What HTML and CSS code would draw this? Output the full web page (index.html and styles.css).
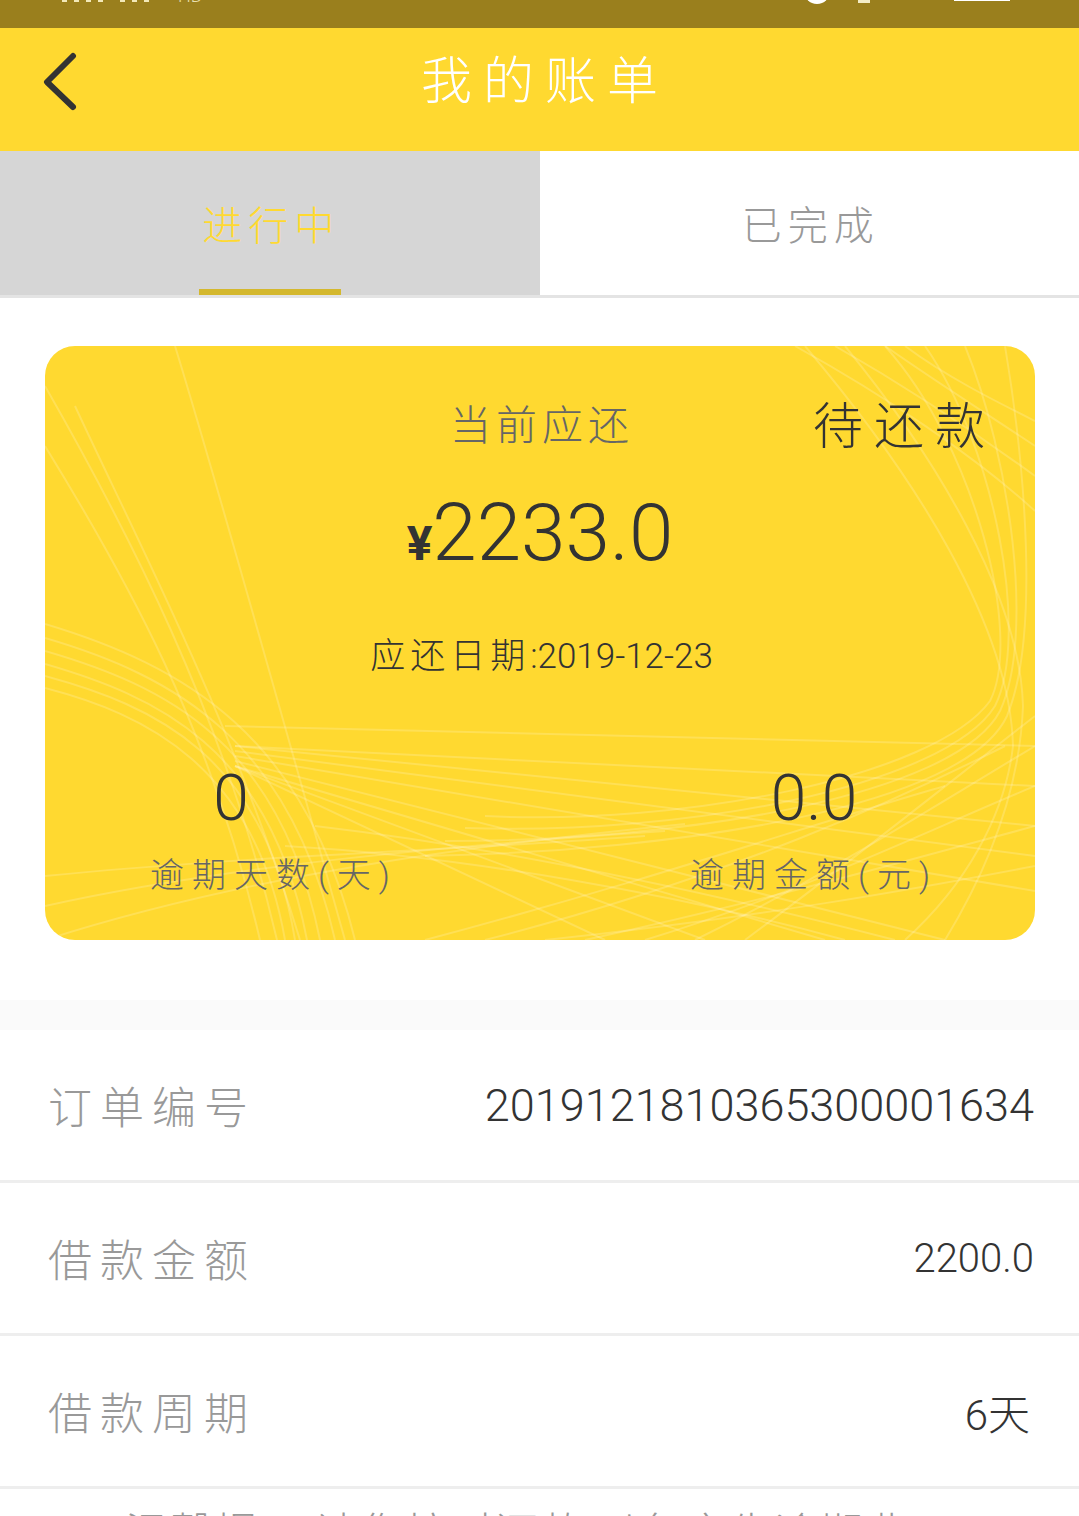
FILE: index.html
```html
<!DOCTYPE html>
<html lang="zh-CN">
<head>
    <meta charset="UTF-8">
    <meta name="viewport" content="width=device-width, initial-scale=1.0">
    <title>我的账单</title>
    <link rel="stylesheet" href="styles.css">
</head>
<body>
    <!-- status bar, cut off by the top of the screen -->
    <div class="status-bar">
        <div class="status-left">
            <span class="dot"></span><span class="dot"></span><span class="dot"></span><span class="dot"></span>
            <span class="dot dot-gap"></span><span class="dot"></span><span class="dot"></span>
            <span class="net">HD</span>
        </div>
        <div class="status-right">
            <span class="clock"></span>
            <span class="signal"></span>
            <span class="battery"></span>
        </div>
    </div>

    <header class="top-bar">
        <svg class="back" width="36" height="60" viewBox="0 0 36 60">
            <polyline points="30,5 4,31 30,56" fill="none" stroke="#333" stroke-width="6" stroke-linecap="round" stroke-linejoin="round"/>
        </svg>
        <h1>我的账单</h1>
    </header>

    <nav class="tabs">
        <div class="tab tab-active">进行中</div>
        <div class="tab">已完成</div>
    </nav>

    <section class="card-wrap">
        <div class="card">
            <svg class="card-lines" width="990" height="594" viewBox="0 0 990 594">
                <g fill="none" stroke="#fff" stroke-opacity="0.18" stroke-width="2">
                    <!-- left swoosh -->
                    <path d="M0 318 C110 350 225 400 262 594"/>
                    <path d="M0 330 C110 360 220 410 250 594"/>
                    <path d="M0 342 C100 368 210 420 240 594"/>
                    <path d="M0 305 C120 340 235 395 275 594"/>
                    <path d="M0 292 C130 330 245 395 290 594"/>
                    <path d="M0 278 C140 320 260 390 310 594"/>
                    <path d="M0 100 C80 230 165 380 215 594"/>
                    <path d="M0 40 C80 180 180 370 232 594"/>
                    <path d="M30 60 C90 190 190 380 255 594"/>
                    <path d="M130 0 C170 130 240 380 300 594"/>
                    <!-- rays out of the swoosh -->
                    <path d="M190 400 L990 480"/>
                    <path d="M190 405 L990 510"/>
                    <path d="M190 410 L990 545"/>
                    <path d="M190 415 L900 594"/>
                    <path d="M190 420 L780 594"/>
                    <path d="M190 420 L660 594"/>
                    <path d="M190 420 L560 594"/>
                    <path d="M190 400 L990 440"/>
                    <path d="M180 380 L990 400"/>
                    <!-- right swoosh -->
                    <path d="M420 482 C640 490 900 440 950 360 C985 290 950 100 880 0"/>
                    <path d="M400 495 C640 495 910 450 955 365 C990 290 965 110 920 0"/>
                    <path d="M380 510 C640 505 920 460 962 370 C995 290 980 120 960 0"/>
                    <path d="M440 470 C640 480 890 430 945 355 C978 290 930 100 840 0"/>
                    <path d="M0 594 C200 530 420 500 640 478"/>
                    <path d="M0 560 C180 520 400 500 620 485"/>
                    <path d="M0 530 C200 510 400 505 600 490"/>
                    <path d="M800 0 C890 110 975 250 978 360 C975 440 945 520 900 594"/>
                    <path d="M760 0 C870 130 965 280 968 400 C960 470 920 540 860 594"/>
                    <!-- bottom mesh -->
                    <path d="M990 370 C900 440 800 520 700 594"/>
                    <path d="M990 400 C890 460 780 530 650 594"/>
                    <path d="M990 440 C870 490 760 545 600 594"/>
                    <path d="M990 480 C860 515 720 555 540 594"/>
                    <path d="M990 520 C860 545 720 570 500 594"/>
                    <path d="M960 400 C860 450 690 530 440 594"/>
                    <path d="M900 440 C760 480 620 530 380 594"/>
                    <path d="M240 500 C420 510 640 550 800 594"/>
                    <path d="M270 480 C440 500 640 540 850 594"/>
                    <!-- top right corner -->
                    <path d="M860 0 C900 30 950 55 990 75"/>
                    <path d="M840 0 C890 35 945 70 990 100"/>
                    <path d="M790 0 C860 40 935 90 990 130"/>
                    <path d="M750 0 C840 50 930 110 990 165"/>
                </g>
            </svg>

            <div class="due-label">当前应还</div>
            <div class="due-status">待还款</div>
            <div class="due-amount"><span class="yen">¥</span>2233.0</div>
            <div class="due-date"><span class="date-cn">应还日期</span>:2019-12-23</div>
            <div class="stats">
                <div class="stat">
                    <div class="stat-num stat-num-days">0</div>
                    <div class="stat-label">逾期天数(天)</div>
                </div>
                <div class="stat">
                    <div class="stat-num">0.0</div>
                    <div class="stat-label">逾期金额(元)</div>
                </div>
            </div>
        </div>
    </section>

    <div class="band"></div>

    <section class="info-list">
        <div class="info-row">
            <span class="info-name">订单编号</span>
            <span class="info-value info-value-long">2019121810365300001634</span>
        </div>
        <div class="info-row">
            <span class="info-name">借款金额</span>
            <span class="info-value">2200.0</span>
        </div>
        <div class="info-row">
            <span class="info-name">借款周期</span>
            <span class="info-value info-value-days">6天</span>
        </div>
        <div class="info-note">温馨提示:请您按时还款,以免产生逾期费用</div>
    </section>
</body>
</html>
```

FILE: styles.css
```css
html, body {
    margin: 0;
    height: 100%;
    overflow: hidden;
}
body {
    font-family: Roboto, "Noto Sans CJK SC", sans-serif;
    font-weight: 300;
    background: #fff;
    color: #333;
}

/* status bar */
.status-bar {
    height: 28px;
    background: #9a7f1d;
    display: flex;
    justify-content: space-between;
    overflow: hidden;
    padding: 0 69px 0 62px;
}
.status-left, .status-right {
    display: flex;
    align-items: flex-start;
}
.dot {
    width: 5px;
    height: 2px;
    margin-right: 7px;
    background: #f3e9b8;
}
.dot-gap {
    margin-left: 10px;
}
.net {
    margin: -12px 0 0 22px;
    font-size: 18px;
    line-height: 16px;
    color: #e8dfae;
}
.clock {
    width: 26px;
    height: 26px;
    margin-top: -22px;
    border-radius: 50%;
    background: #fff;
}
.signal {
    width: 12px;
    height: 3px;
    margin-left: 28px;
    background: #f3ecc6;
}
.battery {
    width: 56px;
    height: 1px;
    margin-left: 84px;
    background: #fff;
}

/* title */
.top-bar {
    position: relative;
    height: 123px;
    background: #ffd930;
    display: flex;
    justify-content: center;
}
.top-bar h1 {
    margin: 24px -11px 0 0;
    font-size: 51px;
    line-height: 60px;
    font-weight: 300;
    letter-spacing: 11px;
    color: #fff;
}
.back {
    position: absolute;
    left: 43px;
    top: 23px;
}

/* tabs */
.tabs {
    display: flex;
    height: 144px;
    border-bottom: 3px solid #e4e4e4;
}
.tab {
    position: relative;
    flex: 1;
    display: flex;
    align-items: center;
    justify-content: center;
    padding-left: 3px;
    font-size: 40px;
    letter-spacing: 6px;
    color: #999;
}
.tab-active {
    background: #d6d6d6;
    color: #ffd930;
}
.tab-active::after {
    content: '';
    position: absolute;
    left: 199px;
    bottom: 0;
    width: 142px;
    height: 6px;
    background: #d4b82e;
}

/* yellow card */
.card-wrap {
    padding: 48px 44px 60px 45px;
}
.card {
    position: relative;
    height: 594px;
    box-sizing: border-box;
    padding-top: 50px;
    border-radius: 30px;
    background: #ffd930;
    overflow: hidden;
    text-align: center;
}
.card-lines {
    position: absolute;
    left: 0;
    top: 0;
}
.due-label, .due-amount, .due-date, .stats {
    position: relative;
}
.due-label {
    padding-left: 4px;
    font-size: 41px;
    line-height: 60px;
    letter-spacing: 5px;
    color: #666;
}
.due-status {
    position: absolute;
    right: 50px;
    top: 51px;
    font-size: 50px;
    line-height: 60px;
    letter-spacing: 11px;
    margin-right: -11px;
    color: #333;
}
.due-amount {
    margin-top: 17px;
    font-size: 80px;
    line-height: 120px;
    color: #333;
}
.yen {
    font-size: 48px;
    font-weight: 700;
}
.due-date {
    margin-top: 28px;
    padding-left: 3px;
    font-size: 35px;
    line-height: 50px;
    color: #333;
}
.date-cn {
    letter-spacing: 5px;
}
.stats {
    margin-top: 82px;
    padding: 0 97px 0 105px;
    display: flex;
    justify-content: space-between;
}
.stat-num {
    font-size: 64px;
    line-height: 70px;
    color: #333;
}
.stat-num-days {
    margin-right: 86px;
}
.stat-label {
    margin-top: 16px;
    font-size: 34px;
    line-height: 50px;
    letter-spacing: 8px;
    color: #666;
}

.band {
    height: 30px;
    background: #fafafa;
}

/* details */
.info-row {
    height: 150px;
    padding: 0 45px 0 48px;
    border-bottom: 3px solid #eee;
    display: flex;
    align-items: center;
    justify-content: space-between;
}
.info-name {
    font-size: 44px;
    letter-spacing: 8px;
    color: #999;
}
.info-value {
    font-size: 40px;
    color: #333;
}
.info-value-long {
    font-size: 45px;
}
.info-value-days {
    margin-right: 4px;
    font-size: 42px;
}
.info-note {
    margin-top: 16px;
    text-align: center;
    font-size: 44px;
    line-height: 60px;
    letter-spacing: 1px;
    color: #999;
}
```
